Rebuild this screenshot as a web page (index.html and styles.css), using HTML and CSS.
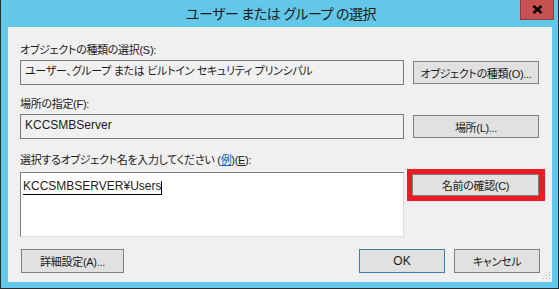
FILE: index.html
```html
<!DOCTYPE html>
<html lang="ja">
<head>
    <meta charset="UTF-8">
    <title>ユーザー または グループ の選択</title>
    <link rel="stylesheet" href="styles.css">
</head>
<body>

    <div class="window">
        <div class="titlebar">
            <span class="title">ユーザー または グループ の選択</span>
            <button class="close-btn" aria-label="閉じる">
                <svg width="11" height="9" viewBox="0 0 11 9">
                    <path d="M1.5 1 L9.5 8 M9.5 1 L1.5 8" stroke="#000" stroke-width="2.4" fill="none"/>
                </svg>
            </button>
        </div>

        <div class="client">
            <div class="label label-first">オブジェクトの種類の選択(S):</div>
            <div class="row">
                <div class="textbox">ユーザー、グループ または ビルトイン セキュリティ プリンシパル</div>
                <button class="btn">オブジェクトの種類(O)...</button>
            </div>

            <div class="label label-second">場所の指定(F):</div>
            <div class="row">
                <div class="textbox latin">KCCSMBServer</div>
                <button class="btn">場所(L)...</button>
            </div>

            <div class="label label-third">選択するオブジェクト名を入力してください (<a href="#">例</a>)(<u>E</u>):</div>
            <div class="row row-names">
                <div class="names-box">
                    <span class="entry latin">KCCSMBSERVER¥Users</span><span class="caret"></span>
                </div>
                <div class="check-wrap">
                    <button class="btn btn-check">名前の確認(C)</button>
                    <span class="highlight"></span>
                </div>
            </div>

            <div class="footer">
                <button class="btn btn-advanced">詳細設定(A)...</button>
                <div class="footer-right">
                    <button class="btn btn-default latin">OK</button>
                    <button class="btn">キャンセル</button>
                </div>
            </div>

            <svg class="grip" width="8" height="8" viewBox="0 0 8 8">
                <rect x="6" y="0" width="1" height="1" fill="#a9a9a9"/>
                <rect x="3" y="3" width="1" height="1" fill="#a9a9a9"/>
                <rect x="6" y="3" width="1" height="1" fill="#a9a9a9"/>
                <rect x="0" y="6" width="1" height="1" fill="#a9a9a9"/>
                <rect x="3" y="6" width="1" height="1" fill="#a9a9a9"/>
                <rect x="6" y="6" width="1" height="1" fill="#a9a9a9"/>
                <rect x="7" y="1" width="1" height="1" fill="#fff"/>
                <rect x="4" y="4" width="1" height="1" fill="#fff"/>
                <rect x="7" y="4" width="1" height="1" fill="#fff"/>
                <rect x="1" y="7" width="1" height="1" fill="#fff"/>
                <rect x="4" y="7" width="1" height="1" fill="#fff"/>
                <rect x="7" y="7" width="1" height="1" fill="#fff"/>
            </svg>
        </div>
    </div>

</body>
</html>
```

FILE: styles.css
```css
body {
    margin: 0;
    padding: 0;
    font-family: "Liberation Sans", "Noto Sans CJK JP", sans-serif;
    font-size: 11px;
    letter-spacing: -0.3px;
    font-feature-settings: "palt";
    color: #1a1a1a;
}

.latin {
    font-family: "Liberation Sans", Arial, sans-serif;
    font-size: 12px;
    letter-spacing: 0;
}

.window {
    width: 559px;
    height: 289px;
    box-sizing: border-box;
    background-color: #62c7e8;
    border: 1px solid #2b2b2b;
    border-top: none;
    padding: 0 6px 6px 7px;
    display: flex;
    flex-direction: column;
}

.titlebar {
    position: relative;
    height: 27px;
    flex: none;
    display: flex;
    justify-content: center;
    align-items: center;
}

.title {
    font-family: "Noto Sans CJK JP", sans-serif;
    font-size: 14px;
    letter-spacing: -0.4px;
    color: #1a1a1a;
    margin-top: -1px;
    margin-left: 2px;
}

.close-btn {
    position: absolute;
    top: 0;
    right: -2px;
    width: 34px;
    height: 20px;
    padding: 0;
    background-color: #c75050;
    border: 1px solid #8e3a3a;
    border-top: none;
    display: flex;
    justify-content: center;
    align-items: center;
}

.client {
    position: relative;
    flex: 1;
    background-color: #f0f0f0;
    padding: 0 12px;
    display: flex;
    flex-direction: column;
}

.label {
    height: 16px;
    line-height: 16px;
    white-space: nowrap;
}

.label-first {
    margin-top: 15px;
}

.label-second {
    margin-top: 11px;
}

.label-third {
    margin-top: 13px;
}

.label a {
    color: #0066cc;
}

.row {
    display: grid;
    grid-template-columns: 384px 126px;
    column-gap: 9px;
    align-items: center;
    height: 25px;
    margin-top: 2px;
}

.textbox {
    height: 25px;
    box-sizing: border-box;
    border: 1px solid #7a7a7a;
    background-color: #f0f0f0;
    padding: 0 4px;
    line-height: 20px;
    white-space: nowrap;
    overflow: hidden;
}

.btn {
    font-family: "Liberation Sans", "Noto Sans CJK JP", sans-serif;
    font-size: 11px;
    letter-spacing: -0.3px;
    font-feature-settings: "palt";
    color: #1a1a1a;
    background-color: #e1e1e1;
    border: 1px solid #7f7f7f;
    border-radius: 0;
    height: 23px;
    padding: 0;
    margin: 0;
    white-space: nowrap;
}

.btn.latin {
    font-size: 12px;
    letter-spacing: 0;
}

.row-names {
    height: 65px;
    margin-top: 4px;
    align-items: start;
}

.names-box {
    height: 65px;
    box-sizing: border-box;
    background-color: #fff;
    border: 1px solid;
    border-color: #7f7f7f #dcdcdc #dcdcdc #7f7f7f;
    padding: 6px 2px 0;
    line-height: 14px;
}

.entry {
    display: inline-block;
    border-bottom: 1px solid #000;
    padding-bottom: 1px;
    vertical-align: top;
    color: #2a1a1a;
}

.caret {
    display: inline-block;
    width: 1px;
    height: 14px;
    margin-top: 2px;
    background-color: #000;
    vertical-align: top;
}

.check-wrap {
    position: relative;
    margin-top: 2px;
}

.btn-check {
    width: 127px;
    height: 22px;
    margin-left: -1px;
}

.highlight {
    position: absolute;
    left: -6px;
    top: -5px;
    right: -6px;
    bottom: -5px;
    border: 5px solid #ed1c24;
    border-right-width: 6px;
}

.footer {
    display: flex;
    justify-content: space-between;
    margin-top: 12px;
}

.footer .btn {
    height: 24px;
    width: 86px;
}

.footer .btn-advanced {
    width: 103px;
    margin-left: 1px;
}

.footer-right {
    display: flex;
    gap: 9px;
}

.footer .btn-default {
    border-color: #3c7fb1;
}

.grip {
    position: absolute;
    right: 1px;
    bottom: 2px;
}
```
